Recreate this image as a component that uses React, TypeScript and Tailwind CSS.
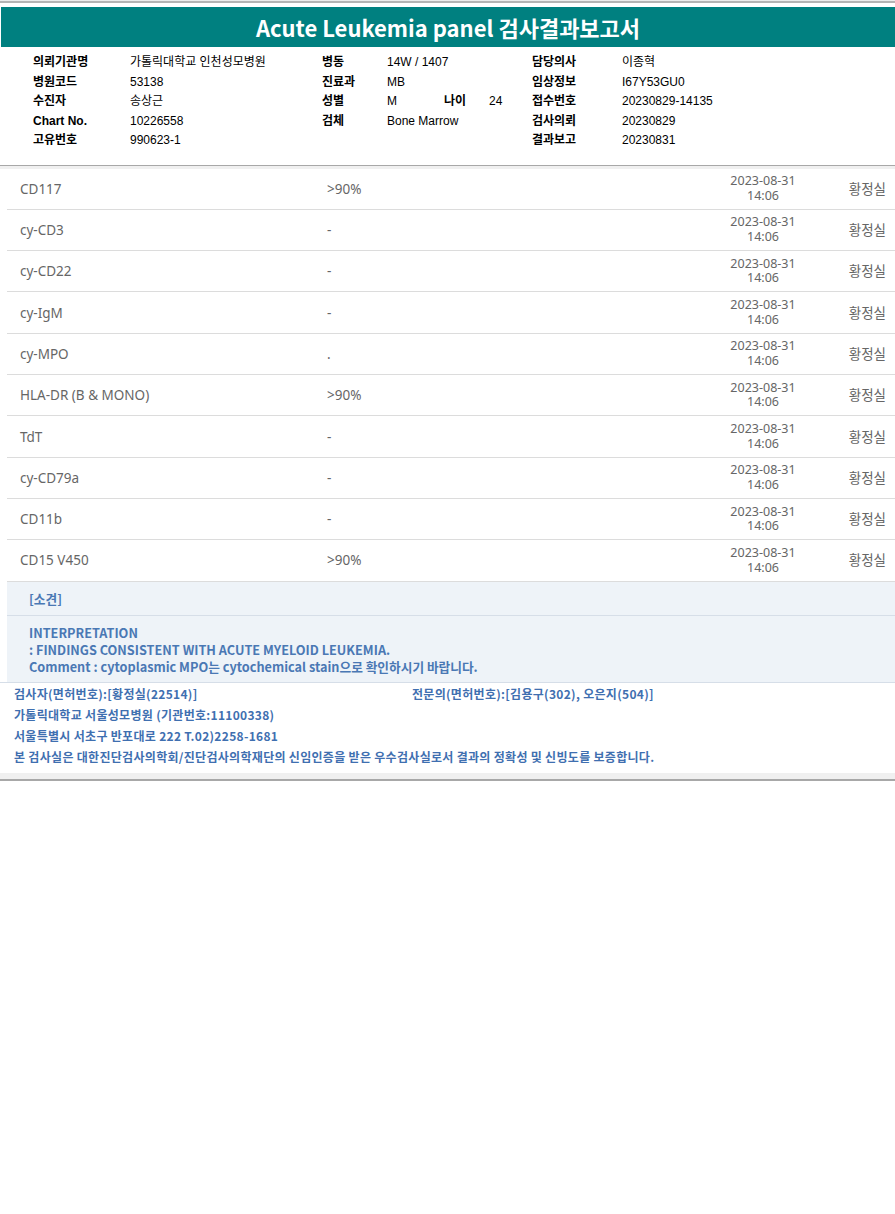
import React from "react";

const rows = [
  { name: "CD117", value: ">90%" },
  { name: "cy-CD3", value: "-" },
  { name: "cy-CD22", value: "-" },
  { name: "cy-IgM", value: "-" },
  { name: "cy-MPO", value: "." },
  { name: "HLA-DR (B & MONO)", value: ">90%" },
  { name: "TdT", value: "-" },
  { name: "cy-CD79a", value: "-" },
  { name: "CD11b", value: "-" },
  { name: "CD15 V450", value: ">90%" },
];

const kr = { fontFamily: '"Noto Sans CJK KR", "Noto Sans", sans-serif' };
const info = { fontFamily: '"Liberation Sans", "Noto Sans CJK KR", sans-serif' };

const App = () => {
  return (
    <div className="w-[895px] min-h-[1214px] bg-white" style={kr}>
      {/* top rule */}
      <div className="h-[3px] border-b-2 border-[#b4b4b4] bg-[#ececec]" />
      <div className="h-[4px]" />

      {/* title bar */}
      <div className="ml-[1px] flex h-[40px] items-center justify-center bg-[#008080]">
        <h1 className="text-[22px] font-bold text-white">
          Acute Leukemia panel 검사결과보고서
        </h1>
      </div>

      {/* patient info */}
      <div
        className="grid grid-cols-[97px_192px_65px_145px_90px_1fr] pl-[33px] pt-[6px] pb-[14px] text-[12px] leading-[19.5px] text-black"
        style={info}
      >
        <span className="font-bold">의뢰기관명</span>
        <span>가톨릭대학교 인천성모병원</span>
        <span className="font-bold">병동</span>
        <span>14W / 1407</span>
        <span className="font-bold">담당의사</span>
        <span>이종혁</span>

        <span className="font-bold">병원코드</span>
        <span>53138</span>
        <span className="font-bold">진료과</span>
        <span>MB</span>
        <span className="font-bold">임상정보</span>
        <span>I67Y53GU0</span>

        <span className="font-bold">수진자</span>
        <span>송상근</span>
        <span className="font-bold">성별</span>
        <span className="flex">
          <span className="w-[57px]">M</span>
          <span className="w-[45px] font-bold">나이</span>
          <span>24</span>
        </span>
        <span className="font-bold">접수번호</span>
        <span>20230829-14135</span>

        <span className="font-bold">Chart No.</span>
        <span>10226558</span>
        <span className="font-bold">검체</span>
        <span>Bone Marrow</span>
        <span className="font-bold">검사의뢰</span>
        <span>20230829</span>

        <span className="font-bold">고유번호</span>
        <span>990623-1</span>
        <span />
        <span />
        <span className="font-bold">결과보고</span>
        <span>20230831</span>
      </div>

      <div className="h-[4px] border-t border-[#a8a8a8] bg-[#f0f0f0]" />

      {/* result table */}
      <div className="ml-[7px]">
        {rows.map((r) => (
          <div
            key={r.name}
            className="flex h-[41.33px] items-center border-b border-[#dcdcdc] text-[#666]"
            style={{ fontFamily: '"Noto Sans", "Noto Sans CJK KR", sans-serif' }}
          >
            <div className="w-[320px] pl-[13px] text-[13.5px]">{r.name}</div>
            <div className="flex-1 text-[13.5px]">{r.value}</div>
            <div className="w-[100px] text-center text-[12.5px] leading-[14.5px]">
              <div>2023-08-31</div>
              <div>14:06</div>
            </div>
            <div className="w-[82px] pr-[9px] text-right text-[13.5px]">황정실</div>
          </div>
        ))}

        {/* opinion */}
        <div className="bg-[#eef3f8] text-[12.7px] font-bold text-[#4a78b4]">
          <div className="flex h-[34px] items-center border-b border-[#d6dee8] pl-[22px]">
            [소견]
          </div>
          <div className="pl-[22px] pt-[8px] pb-[7px] leading-[17px]">
            <div>INTERPRETATION</div>
            <div>: FINDINGS CONSISTENT WITH ACUTE MYELOID LEUKEMIA.</div>
            <div>Comment : cytoplasmic MPO는 cytochemical stain으로 확인하시기 바랍니다.</div>
          </div>
        </div>
      </div>

      {/* footer */}
      <div className="border-t border-[#d6dee8] pl-[14px] pb-[6px] text-[12px] font-bold leading-[21px] tracking-[0.3px] text-[#3f6fb0]">
        <div className="flex">
          <span className="w-[398px]">검사자(면허번호):[황정실(22514)]</span>
          <span>전문의(면허번호):[김용구(302), 오은지(504)]</span>
        </div>
        <div>가톨릭대학교 서울성모병원 (기관번호:11100338)</div>
        <div>서울특별시 서초구 반포대로 222 T.02)2258-1681</div>
        <div>
          본 검사실은 대한진단검사의학회/진단검사의학재단의 신임인증을 받은 우수검사실로서 결과의 정확성 및 신빙도를 보증합니다.
        </div>
      </div>

      <div className="h-[8px] border-b-2 border-[#a8a8a8] bg-[#f0f0f0]" />
    </div>
  );
};

export default App;
